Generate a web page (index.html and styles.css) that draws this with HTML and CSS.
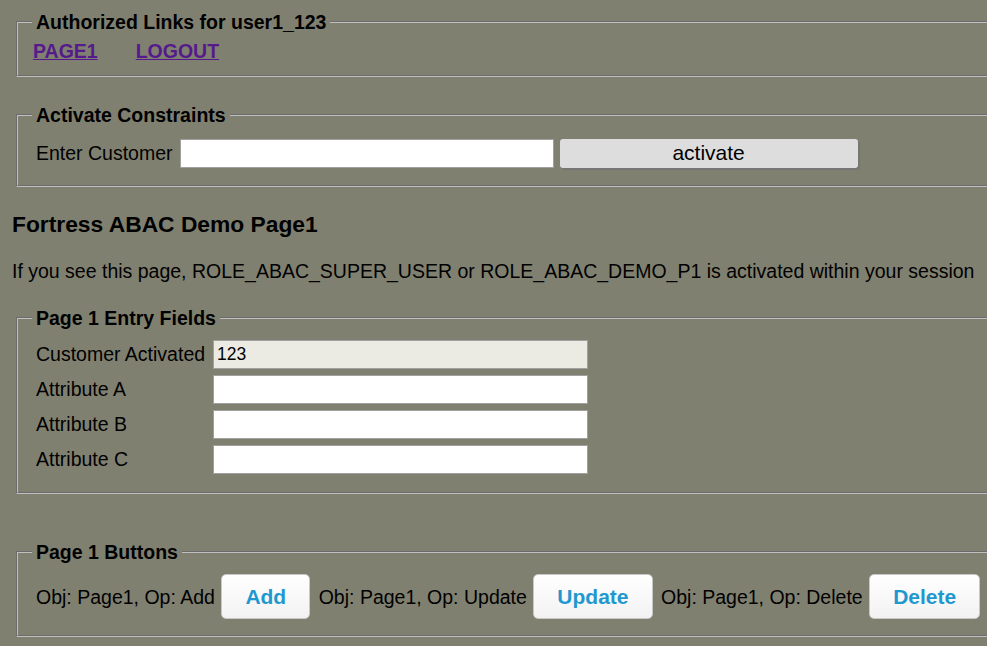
FILE: index.html
```html
<!DOCTYPE html>
<html>
<head>
<meta charset="utf-8">
<title>Fortress ABAC Demo Page1</title>
<link rel="stylesheet" href="styles.css">
</head>
<body>
<div class="page">
  <fieldset class="box box-links">
    <legend>Authorized Links for user1_123</legend>
    <div class="links">
      <a href="#" class="link">PAGE1</a>
      <a href="#" class="link">LOGOUT</a>
    </div>
  </fieldset>

  <fieldset class="box box-activate">
    <legend>Activate Constraints</legend>
    <div class="row-activate">
      <span class="label">Enter Customer</span>
      <input class="field field-customer" type="text">
      <button class="btn-activate" type="button">activate</button>
    </div>
  </fieldset>

  <h3 class="title">Fortress ABAC Demo Page1</h3>
  <p class="info">If you see this page, ROLE_ABAC_SUPER_USER or ROLE_ABAC_DEMO_P1 is activated within your session</p>

  <fieldset class="box box-fields">
    <legend>Page 1 Entry Fields</legend>
    <div class="grid">
      <span class="label">Customer Activated</span>
      <input class="field field-ro" type="text" value="123" readonly>
      <span class="label">Attribute A</span>
      <input class="field" type="text">
      <span class="label">Attribute B</span>
      <input class="field" type="text">
      <span class="label">Attribute C</span>
      <input class="field" type="text">
    </div>
  </fieldset>

  <fieldset class="box box-buttons">
    <legend>Page 1 Buttons</legend>
    <div class="row-buttons">
      <span class="label">Obj: Page1, Op: Add</span>
      <button class="btn-op" type="button">Add</button>
      <span class="label">Obj: Page1, Op: Update</span>
      <button class="btn-op" type="button">Update</button>
      <span class="label">Obj: Page1, Op: Delete</span>
      <button class="btn-op" type="button">Delete</button>
    </div>
  </fieldset>
</div>
</body>
</html>
```
FILE: styles.css
```css
html {
  overflow: hidden;
  background: #808070;
}
body {
  margin: 0;
  background: #808070;
  color: #000;
  font-family: "Liberation Sans", Arial, sans-serif;
  font-size: 19.5px;
  line-height: 22px;
}
.page {
  width: 1010px;
  padding: 0 0 0 12px;
}
.box {
  margin: 0 0 0 4px;
  padding: 0 18px;
  border: 2px groove #c0c0c0;
  min-width: 0;
}
.box legend {
  font-weight: bold;
  line-height: 22px;
  padding: 0 4px;
  margin-left: -4px;
}
.box-links {
  margin-top: 11px;
  padding-top: 7px;
  padding-bottom: 13px;
}
.links {
  display: flex;
  gap: 38px;
  margin-left: -3px;
}
.link {
  color: #551a8b;
  font-weight: bold;
  text-decoration: underline;
}
.box-activate {
  margin-top: 27px;
  padding-top: 12px;
  padding-bottom: 17px;
}
.row-activate {
  display: flex;
  align-items: center;
  height: 30px;
}
.label {
  white-space: nowrap;
}
.field {
  box-sizing: border-box;
  height: 29px;
  border: 1px solid #a0a0a0;
  background: #fff;
  font-family: "Liberation Sans", Arial, sans-serif;
  font-size: 17.5px;
  padding: 0 3px;
  margin: 0;
  outline: none;
}
.field-customer {
  width: 374px;
  margin-left: 7px;
}
.field-ro {
  background: #ebebe4;
}
.btn-activate {
  box-sizing: border-box;
  width: 298px;
  height: 29px;
  margin-left: 6px;
  background: #dddddd;
  border: none;
  border-radius: 3px;
  box-shadow: 2px 2px 0 #767676;
  font-family: "Liberation Sans", Arial, sans-serif;
  font-size: 21px;
  color: #000;
  padding: 0;
}
.title {
  margin: 24px 0 0 0;
  font-size: 22.8px;
  line-height: 27px;
}
.info {
  margin: 22px 0 0 0;
  white-space: nowrap;
}
.box-fields {
  margin-top: 25px;
  padding-top: 11px;
  padding-bottom: 18px;
}
.grid {
  display: grid;
  grid-template-columns: 177px 375px;
  row-gap: 6px;
  align-items: center;
}
.grid .label {
  padding-bottom: 2px;
}
.grid .field {
  width: 375px;
}
.box-buttons {
  margin-top: 47px;
  padding-top: 11px;
  padding-bottom: 16px;
}
.row-buttons {
  display: flex;
  align-items: center;
}
.btn-op {
  box-sizing: border-box;
  height: 45px;
  margin: 0 8.5px 0 6.5px;
  padding: 0 23px;
  background: linear-gradient(#ffffff, #f2f2f2);
  border: 1px solid #c8c8c8;
  border-radius: 5px;
  color: #1f98cf;
  font-family: "Liberation Sans", Arial, sans-serif;
  font-weight: bold;
  font-size: 21px;
}
```
